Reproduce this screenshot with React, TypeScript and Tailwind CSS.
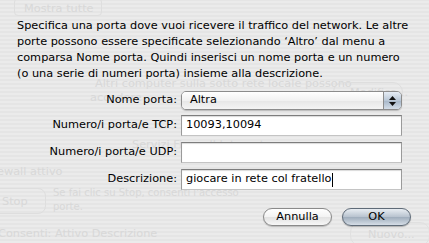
import React from "react";

const font = { fontFamily: '"DejaVu Sans", "Liberation Sans", sans-serif' };

function Ghost() {
  const g = "absolute whitespace-nowrap text-[#d8d8d8]";
  return (
    <div className="absolute inset-0 text-[11.3px]" style={font}>
      <div className="absolute left-[14px] top-[-2px] h-[18px] w-[88px] rounded-[4px] border border-[#dedede]" />
      <div className={g + " left-[24px] top-[1px]"}>Mostra tutte</div>
      <div className={g + " left-[95px] top-[76px]"}>Altri computer sulla sotto rete locale possono</div>
      <div className={g + " left-[90px] top-[90px]"}>accedere</div>
      <div className="absolute left-[333px] top-[82px] h-[20px] w-[70px] rounded-[10px] border border-[#dedede]" />
      <div className={g + " left-[350px] top-[85px]"}>Modifica...</div>
      <div className={g + " left-[132px] top-[137px]"}>Servizi    Firewall    Internet</div>
      <div className={g + " left-[-3px] top-[164px]"}>ewall attivo</div>
      <div className="absolute left-[-10px] top-[188px] h-[26px] w-[56px] rounded-[8px] border border-[#dedede]" />
      <div className={g + " left-[2px] top-[194px]"}>Stop</div>
      <div className={g + " left-[53px] top-[185px] text-[10px]"}>Se fai clic su Stop, consenti l'accesso</div>
      <div className={g + " left-[53px] top-[199px] text-[10px]"}>porte.</div>
      <div className={g + " left-[-2px] top-[226px]"}>Consenti:   Attivo  Descrizione</div>
      <div className="absolute left-[350px] top-[222px] h-[24px] w-[80px] rounded-[10px] border border-[#e0e0e0]" />
      <div className={g + " left-[368px] top-[227px]"}>Nuovo...</div>
    </div>
  );
}

function Field({ value, caret }: { value?: string; caret?: boolean }) {
  return (
    <div className="flex h-[21px] w-[221px] items-center border border-[#9a9a9a] border-t-[#7d7d7d] border-b-[#c4c4c4] bg-white pl-[4px] text-[11.3px] text-black shadow-[inset_0_1px_1px_rgba(0,0,0,0.15)]">
      <span className="whitespace-nowrap">{value}</span>
      {caret && <span className="ml-[1px] h-[14px] w-[1px] bg-black" />}
    </div>
  );
}

function Label({ children }: { children: React.ReactNode }) {
  return <div className="w-[177px] shrink-0 whitespace-nowrap text-right text-[11.3px] text-black">{children}</div>;
}

function Row({ children, className }: { children: React.ReactNode; className?: string }) {
  return <div className={"flex items-center gap-[4px] " + (className ?? "")}>{children}</div>;
}

export default function App() {
  return (
    <div
      className="relative h-[243px] w-[429px] overflow-hidden bg-[repeating-linear-gradient(0deg,#ebebeb_0px,#ebebeb_2px,#e5e5e5_2px,#e5e5e5_4px)]"
      style={font}
    >
      <Ghost />
      <div className="relative flex flex-col pt-[18px]">
        <div className="pl-[17px] text-[11.3px] leading-[16px] text-black">
          <div className="whitespace-nowrap">Specifica una porta dove vuoi ricevere il traffico del network. Le altre</div>
          <div className="whitespace-nowrap">porte possono essere specificate selezionando ‘Altro’ dal menu a</div>
          <div className="whitespace-nowrap">comparsa Nome porta. Quindi inserisci un nome porta e un numero</div>
          <div className="whitespace-nowrap">(o una serie di numeri porta) insieme alla descrizione.</div>
        </div>
        <div className="mt-[9px] flex flex-col gap-[6px]">
          <Row className="h-[19px] mb-[-1px]">
            <Label>Nome porta:</Label>
            <div className="flex h-[19px] w-[221px] overflow-hidden rounded-[5px] border border-[#8c8c8c] shadow-[0_1px_1px_rgba(0,0,0,0.2)]">
              <div className="flex flex-1 items-center bg-[linear-gradient(#ffffff,#f1f1f1_50%,#e6e6e6_51%,#f4f4f4)] pl-[8px] text-[11.3px] text-black">
                Altra
              </div>
              <div className="flex w-[18px] flex-col items-center justify-center gap-[2px] border-l border-[#8c8c8c] bg-[linear-gradient(#e6edf5,#b9c7d6_50%,#a6b6c8_51%,#d3dde8)]">
                <svg width="7" height="4" viewBox="0 0 7 4"><path d="M3.5 0 L7 4 L0 4 Z" fill="#111" /></svg>
                <svg width="7" height="4" viewBox="0 0 7 4"><path d="M0 0 L7 0 L3.5 4 Z" fill="#111" /></svg>
              </div>
            </div>
          </Row>
          <Row className="h-[21px]">
            <Label>Numero/i porta/e TCP:</Label>
            <Field value="10093,10094" />
          </Row>
          <Row className="h-[21px]">
            <Label>Numero/i porta/e UDP:</Label>
            <Field />
          </Row>
          <Row className="h-[21px]">
            <Label>Descrizione:</Label>
            <Field value="giocare in rete col fratello" caret />
          </Row>
        </div>
        <div className="mt-[18px] flex justify-end gap-[10px] pr-[18px]">
          <div className="flex h-[18px] w-[69px] items-center justify-center rounded-full border border-[#8a8a8a] bg-[linear-gradient(#ffffff,#f3f3f3_50%,#e2e2e2_51%,#f7f7f7)] text-[11.3px] text-black shadow-[0_1px_1px_rgba(0,0,0,0.2)]">
            Annulla
          </div>
          <div className="flex h-[18px] w-[69px] items-center justify-center rounded-full border border-[#5f6b78] bg-[linear-gradient(#e8edf2,#b7c2ce_50%,#9fadbc_51%,#d5dde6)] text-[11.3px] text-black shadow-[0_1px_1px_rgba(0,0,0,0.25)]">
            OK
          </div>
        </div>
      </div>
    </div>
  );
}
